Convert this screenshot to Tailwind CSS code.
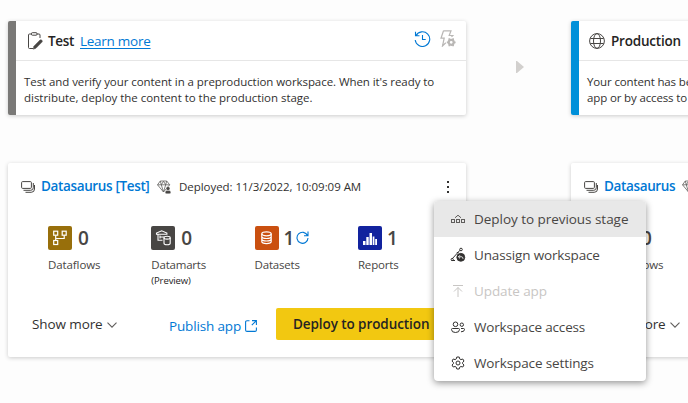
<!DOCTYPE html>
<html lang="en">
<head>
<meta charset="utf-8">
<title>Deployment pipeline</title>
<script src="https://cdn.jsdelivr.net/npm/@tailwindcss/browser@4"></script>
</head>
<body class="relative h-[403px] w-[688px] overflow-hidden bg-[#fdfdfd] font-['Open_Sans','Noto_Sans',sans-serif] text-[#252423]">
<svg class="hidden">
  <symbol id="stack" viewBox="0 0 14 12" fill="none" stroke="#484644"><rect x=".6" y=".6" width="9.8" height="6.8" rx="1"/><path d="M2.5 9.3h7.2q2.600 0 2.600-2.600V2M4.500 11.300h5.700q3.300 0 3.300-3.300V4"/></symbol>
  <symbol id="gem" viewBox="0 0 14 14" fill="none" stroke="#605e5c" stroke-width=".8"><path d="M3.300 1h6.400l3 3.800L6.500 12 .5 4.800zM.5 4.800h12.200M3.300 1l1 3.800L6.500 12l2.200-7.200 1-3.800M4.300 4.800l2.200-3.600 2.200 3.600"/><circle cx="11" cy="8.500" r="2" fill="#484644" stroke="#fff" stroke-width=".5"/><rect x="8.200" y="10.600" width="5.600" height="3.200" rx="1.500" fill="#484644" stroke="#fff" stroke-width=".4"/></symbol>
  <symbol id="chev" viewBox="0 0 10 6" fill="none" stroke="#605e5c" stroke-width="1.100"><path d="M.5.6 5 5.100 9.500.6"/></symbol>
  <symbol id="flow" viewBox="0 0 24 24" fill="none" stroke="#fff" stroke-width="1.200"><rect x="5.700" y="5.200" width="4" height="4"/><rect x="14.200" y="5.200" width="4" height="4"/><rect x="5.700" y="14.500" width="4" height="4"/><path d="M7.700 9.200v5.300M7.700 12.500h8.500V9.200"/></symbol>
</svg>

<main class="flex pt-[21px] pl-2">
  <section class="flex w-[458px] shrink-0 flex-col gap-12">
    <article class="h-[94px] rounded-[2px] border-l-8 border-[#7a7977] bg-white shadow-[0_1px_4px_rgba(0,0,0,.2)]">
      <header class="flex h-[40px] items-center border-b border-[#e6e6e6] pr-[10px] pl-3">
        <svg class="h-[18px] w-[15px]" viewBox="0 0 15 18" fill="none" stroke="#484644"><path d="M4 2H1.500Q.5 2 .5 3v12.500q0 1 1 1H5M8.500 2h2.500q1 0 1 1v3"/><rect x="3.500" y=".7" width="5.500" height="2.500" rx=".8"/><path d="m5.200 17.200.7-3L12 8.100q1-.8 1.900.1t.1 1.900l-6.100 6.200z" fill="#484644" stroke-width=".5"/></svg>
        <h2 class="mt-px ml-[5px] w-[25px] text-[13.500px] font-semibold tracking-[-.3px]">Test</h2>
        <a class="mt-px ml-[7px] text-[13.500px] tracking-[-.26px] text-[#0078d4] underline underline-offset-2">Learn more</a>
        <svg class="mb-1 ml-auto h-4 w-[17px]" viewBox="0 0 17 16" fill="none" stroke="#0078d4" stroke-width="1.100"><path d="M2 4.700A7.300 7.300 0 1 1 1.200 9M1.500.8v4h4M8.500 4v4.500h3.200"/></svg>
        <svg class="mb-1 ml-[9px] h-[17px] w-4" viewBox="0 0 16 17" fill="none" stroke="#b9b7b5" stroke-width="1.200"><path d="M11 5.500h1.800l-1.300 1.300M3.500.8h7.500L9.200 5.500H12M3.500.8 1 8.200h3.200L2.500 16l3.300-3.200"/><circle cx="11.200" cy="12.300" r="2.500" stroke-width="2.200"/><path d="M9.300 8.300v2M13.100 8.300v2M9.300 14.300v2M13.100 14.300v2M6.800 12.300h2M13.600 12.300h2" stroke-width="1.700"/></svg>
      </header>
      <p class="pt-[13px] pl-2 text-[11.500px] leading-4 tracking-[-.07px] whitespace-nowrap text-[#323130]">Test and verify your content in a preproduction workspace. When it's ready to<br><span class="tracking-[-.03px]">distribute, deploy the content to the production stage.</span></p>
    </article>

    <article class="h-[194px] rounded-[2px] bg-white shadow-[0_1px_4px_rgba(0,0,0,.2)]">
      <header class="flex h-[47px] items-center pr-4 pl-[13px]">
        <svg class="h-3 w-[14px]"><use href="#stack"/></svg>
        <h3 class="ml-[6px] text-[13.500px] font-semibold tracking-[-.36px] whitespace-nowrap text-[#0078d4]"><span class="block w-[108px]">Datasaurus [Test]</span></h3>
        <svg class="ml-2 size-[14px]"><use href="#gem"/></svg>
        <span class="ml-2 text-[11.500px] tracking-[-.04px] whitespace-nowrap text-[#323130]">Deployed: 11/3/2022, 10:09:09 AM</span>
        <span class="mr-px ml-auto flex flex-col gap-[3px]"><i class="size-[2px] bg-[#323130]"></i><i class="size-[2px] bg-[#323130]"></i><i class="size-[2px] bg-[#323130]"></i></span>
      </header>
      <div class="grid h-[98px] grid-cols-[repeat(4,103.300px)] pt-4 pl-10 text-[#484644]">
        <div>
          <div class="flex h-6 items-center"><svg class="size-6 rounded-[2px] bg-[#986f0b]"><use href="#flow"/></svg><b class="mt-px ml-[6px] text-[19px] font-semibold">0</b></div>
          <div class="mt-[7px] text-[11.500px] leading-4 tracking-[-.1px]">Dataflows</div>
        </div>
        <div>
          <div class="flex h-6 items-center"><svg class="size-6 rounded-[2px] bg-[#484644]" viewBox="0 0 24 24" fill="none" stroke="#fff" stroke-width="1.100"><path d="M5.500 8.300V7.100L10.700 4.800l5.200 2.300v1.200zM7 8.300v6h4.500M9 11h4M9 9.500v3"/><path d="M13 11.700v5.500q0 1.500 3.100 1.500t3.100-1.500v-5.500" fill="#484644"/><ellipse cx="16.100" cy="11.700" rx="3.100" ry="1.400" fill="#484644"/></svg><b class="mt-px ml-[6px] text-[19px] font-semibold">0</b></div>
          <div class="mt-[7px] text-[11.500px] leading-4 tracking-[-.2px]">Datamarts</div>
          <div class="text-[9.500px] leading-4 tracking-[-.1px] text-[#252423]">(Preview)</div>
        </div>
        <div>
          <div class="flex h-6 items-center"><svg class="size-6 rounded-[2px] bg-[#ca5010]" viewBox="0 0 24 24" fill="none" stroke="#fff" stroke-width="1.200"><ellipse cx="11.500" cy="7.800" rx="4.700" ry="2"/><path d="M6.800 7.800v7.800q0 2 4.700 2t4.700-2V7.800M6.800 10.500q0 2 4.700 2t4.700-2M6.800 13q0 2 4.700 2t4.700-2"/></svg><b class="mt-px ml-[5px] text-[19px] font-semibold">1</b><svg class="mb-[2px] ml-[2px] size-[13px]" viewBox="0 0 13 13" fill="none" stroke="#0078d4" stroke-width="1.100"><path d="M11.500 4.500A5.500 5.500 0 1 0 12 7M12 .5v4.300H8"/></svg></div>
          <div class="mt-[7px] text-[11.500px] leading-4 tracking-[-.2px]">Datasets</div>
        </div>
        <div>
          <div class="flex h-6 items-center"><svg class="size-6 rounded-[2px] bg-[#12239e]" viewBox="0 0 24 24" fill="#fff"><path d="M5 15h2.500v4H5zM8.300 11h2.400v8H8.300zM11.500 7H14v12h-2.500zM14.700 10.500h1.700V19h-1.700zM17.200 13H19v6h-1.800z"/></svg><b class="mt-px ml-[5px] text-[19px] font-semibold">1</b></div>
          <div class="mt-[7px] text-[11.500px] leading-4 tracking-[-.15px]">Reports</div>
        </div>
      </div>
      <footer class="flex h-8 items-center pr-5 pl-6 whitespace-nowrap">
        <span class="text-[13.500px] tracking-[-.1px] text-[#323130]">Show more</span>
        <svg class="mt-[2px] ml-[4px] h-[6px] w-[10px]"><use href="#chev"/></svg>
        <a class="mt-1 ml-auto text-[13.500px] tracking-[-.15px] text-[#0078d4]">Publish app</a>
        <svg class="mt-1 ml-[4px] size-3" viewBox="0 0 12 12" fill="none" stroke="#0078d4" stroke-width="1.100"><path d="M4.500.8H2Q.6.8.6 2v8q0 1.400 1.400 1.400h8q1.400 0 1.400-1.400V7.500M7 .6h4.400V5M11.400.6 6.800 5.200"/></svg>
        <button class="ml-[19px] h-8 w-[170px] rounded-[2px] bg-[#f2c811] pt-px text-left text-[13.500px] font-semibold tracking-[-.08px] text-[#252423]"><span class="pl-[17px]">Deploy to production</span></button>
      </footer>
    </article>
  </section>

  <div class="flex h-[94px] w-[105px] shrink-0 items-center pl-[50px]"><svg class="mb-[2px] h-3 w-2" viewBox="0 0 8 12" fill="#d2d0ce"><path d="M0 0h1l7 6-7 6H0z"/></svg></div>

  <section class="flex min-w-0 flex-1 flex-col gap-12">
    <article class="-mr-2 h-[94px] rounded-l-[2px] border-l-8 border-[#0090d9] bg-white shadow-[0_1px_4px_rgba(0,0,0,.2)]">
      <header class="flex h-[40px] items-center border-b border-[#e6e6e6] pl-[10px]">
        <svg class="size-4" viewBox="0 0 16 16" fill="none" stroke="#484644"><circle cx="8" cy="8" r="7.400"/><ellipse cx="8" cy="8" rx="3.500" ry="7.400"/><path d="M1.300 5.500h13.400M1.300 10.500h13.400"/></svg>
        <h2 class="mt-px ml-[6px] text-[13.500px] font-semibold tracking-[-.2px]">Production</h2>
      </header>
      <p class="pt-[13px] pl-2 text-[11.500px] leading-4 tracking-[-.14px] whitespace-nowrap text-[#323130]">Your content has be<br>app or by access to</p>
    </article>
    <article class="-mr-2 h-[194px] rounded-l-[2px] bg-white shadow-[0_1px_4px_rgba(0,0,0,.2)]">
      <header class="flex h-[47px] items-center pl-[13px]">
        <svg class="h-3 w-[14px] shrink-0"><use href="#stack"/></svg>
        <h3 class="ml-[6px] text-[13.500px] font-semibold tracking-[-.36px] text-[#0078d4]"><span class="block w-[71px]">Datasaurus</span></h3>
        <svg class="ml-[7px] size-[14px] shrink-0"><use href="#gem"/></svg>
      </header>
      <div class="h-[98px] pt-4 pl-10 text-[#484644]">
        <div class="flex h-6 items-center"><svg class="size-6 rounded-[2px] bg-[#986f0b]"><use href="#flow"/></svg><b class="mt-px ml-[6px] text-[19px] font-semibold">0</b></div>
        <div class="mt-[7px] text-[11.500px] leading-4 tracking-[-.1px]">Dataflows</div>
      </div>
      <footer class="flex h-8 items-center pl-6 whitespace-nowrap">
        <span class="text-[13.500px] tracking-[-.1px] text-[#323130]">Show more</span>
        <svg class="mt-[2px] ml-[4px] h-[6px] w-[10px] shrink-0"><use href="#chev"/></svg>
      </footer>
    </article>
  </section>
</main>

<nav class="absolute top-[201px] left-[434px] w-[212px] overflow-hidden rounded-[4px] bg-white text-[13.500px] whitespace-nowrap text-[#484644] shadow-[0_2px_7px_rgba(0,0,0,.42)]">
  <div class="flex h-9 items-center gap-2 bg-[#e8e8e8] pl-4"><svg class="size-4" viewBox="0 0 16 16" fill="none" stroke="#605e5c"><rect x="1.500" y="8.500" width="3" height="3"/><rect x="6.500" y="8.500" width="3" height="3"/><rect x="11.500" y="8.500" width="3" height="3"/><path d="M5 6.800 8 4.200l3 2.600"/></svg><span class="tracking-[-.04px]">Deploy to previous stage</span></div>
  <div class="flex h-9 items-center gap-2 pl-4"><svg class="size-4" viewBox="0 0 16 16" fill="none" stroke="#323130"><path d="M2 12 10 3.200M1.500 13.500H5M8.500 5.500H6.800"/><circle cx="11" cy="2.500" r="1.300"/><circle cx="2.200" cy="12.500" r="1.100"/><circle cx="10.800" cy="10.300" r="4" fill="#323130" stroke-width=".8"/><path d="M8.500 9.800h3.300q1.200.2 1.200 2M10 8.200 8.400 9.800l1.600 1.600" stroke="#fff" stroke-width=".9"/></svg><span class="tracking-[-.15px]">Unassign workspace</span></div>
  <div class="flex h-9 items-center gap-2 pl-4 text-[#c8c6c4]"><svg class="size-4" viewBox="0 0 16 16" fill="none" stroke="currentColor"><path d="M3 2.500h10M8 14V4.500M4 8.500l4-4 4 4"/></svg><span class="tracking-[-.08px]">Update app</span></div>
  <div class="flex h-9 items-center gap-2 pl-4"><svg class="size-4" viewBox="0 0 16 16" fill="none" stroke="#323130"><circle cx="5.500" cy="5.300" r="2.300"/><circle cx="11.800" cy="5.700" r="1.700"/><path d="M2.500 9.500h6q1 0 1 1 0 3-4 3t-4-3q0-1 1-1zM11 9.500h2.500q1 0 1 1 0 2.300-3.500 2.300"/></svg><span class="tracking-[-.17px]">Workspace access</span></div>
  <div class="flex h-9 items-center gap-2 pl-4"><svg class="size-4" viewBox="0 0 16 16" fill="none" stroke="#323130" stroke-linejoin="round"><path d="m6.800 2h2.400l.5 1.900 1.200.7 1.900-.6L14 6.100l-1.400 1.300v1.300l1.400 1.300-1.200 2-1.900-.5-1.200.7-.5 1.800H6.800l-.5-1.800-1.200-.7-1.900.5-1.200-2 1.400-1.300V7.400L2 6.100 3.200 4l1.900.6 1.200-.7z"/><circle cx="8" cy="8" r="2"/></svg><span class="tracking-[-.12px]">Workspace settings</span></div>
</nav>
</body>
</html>
